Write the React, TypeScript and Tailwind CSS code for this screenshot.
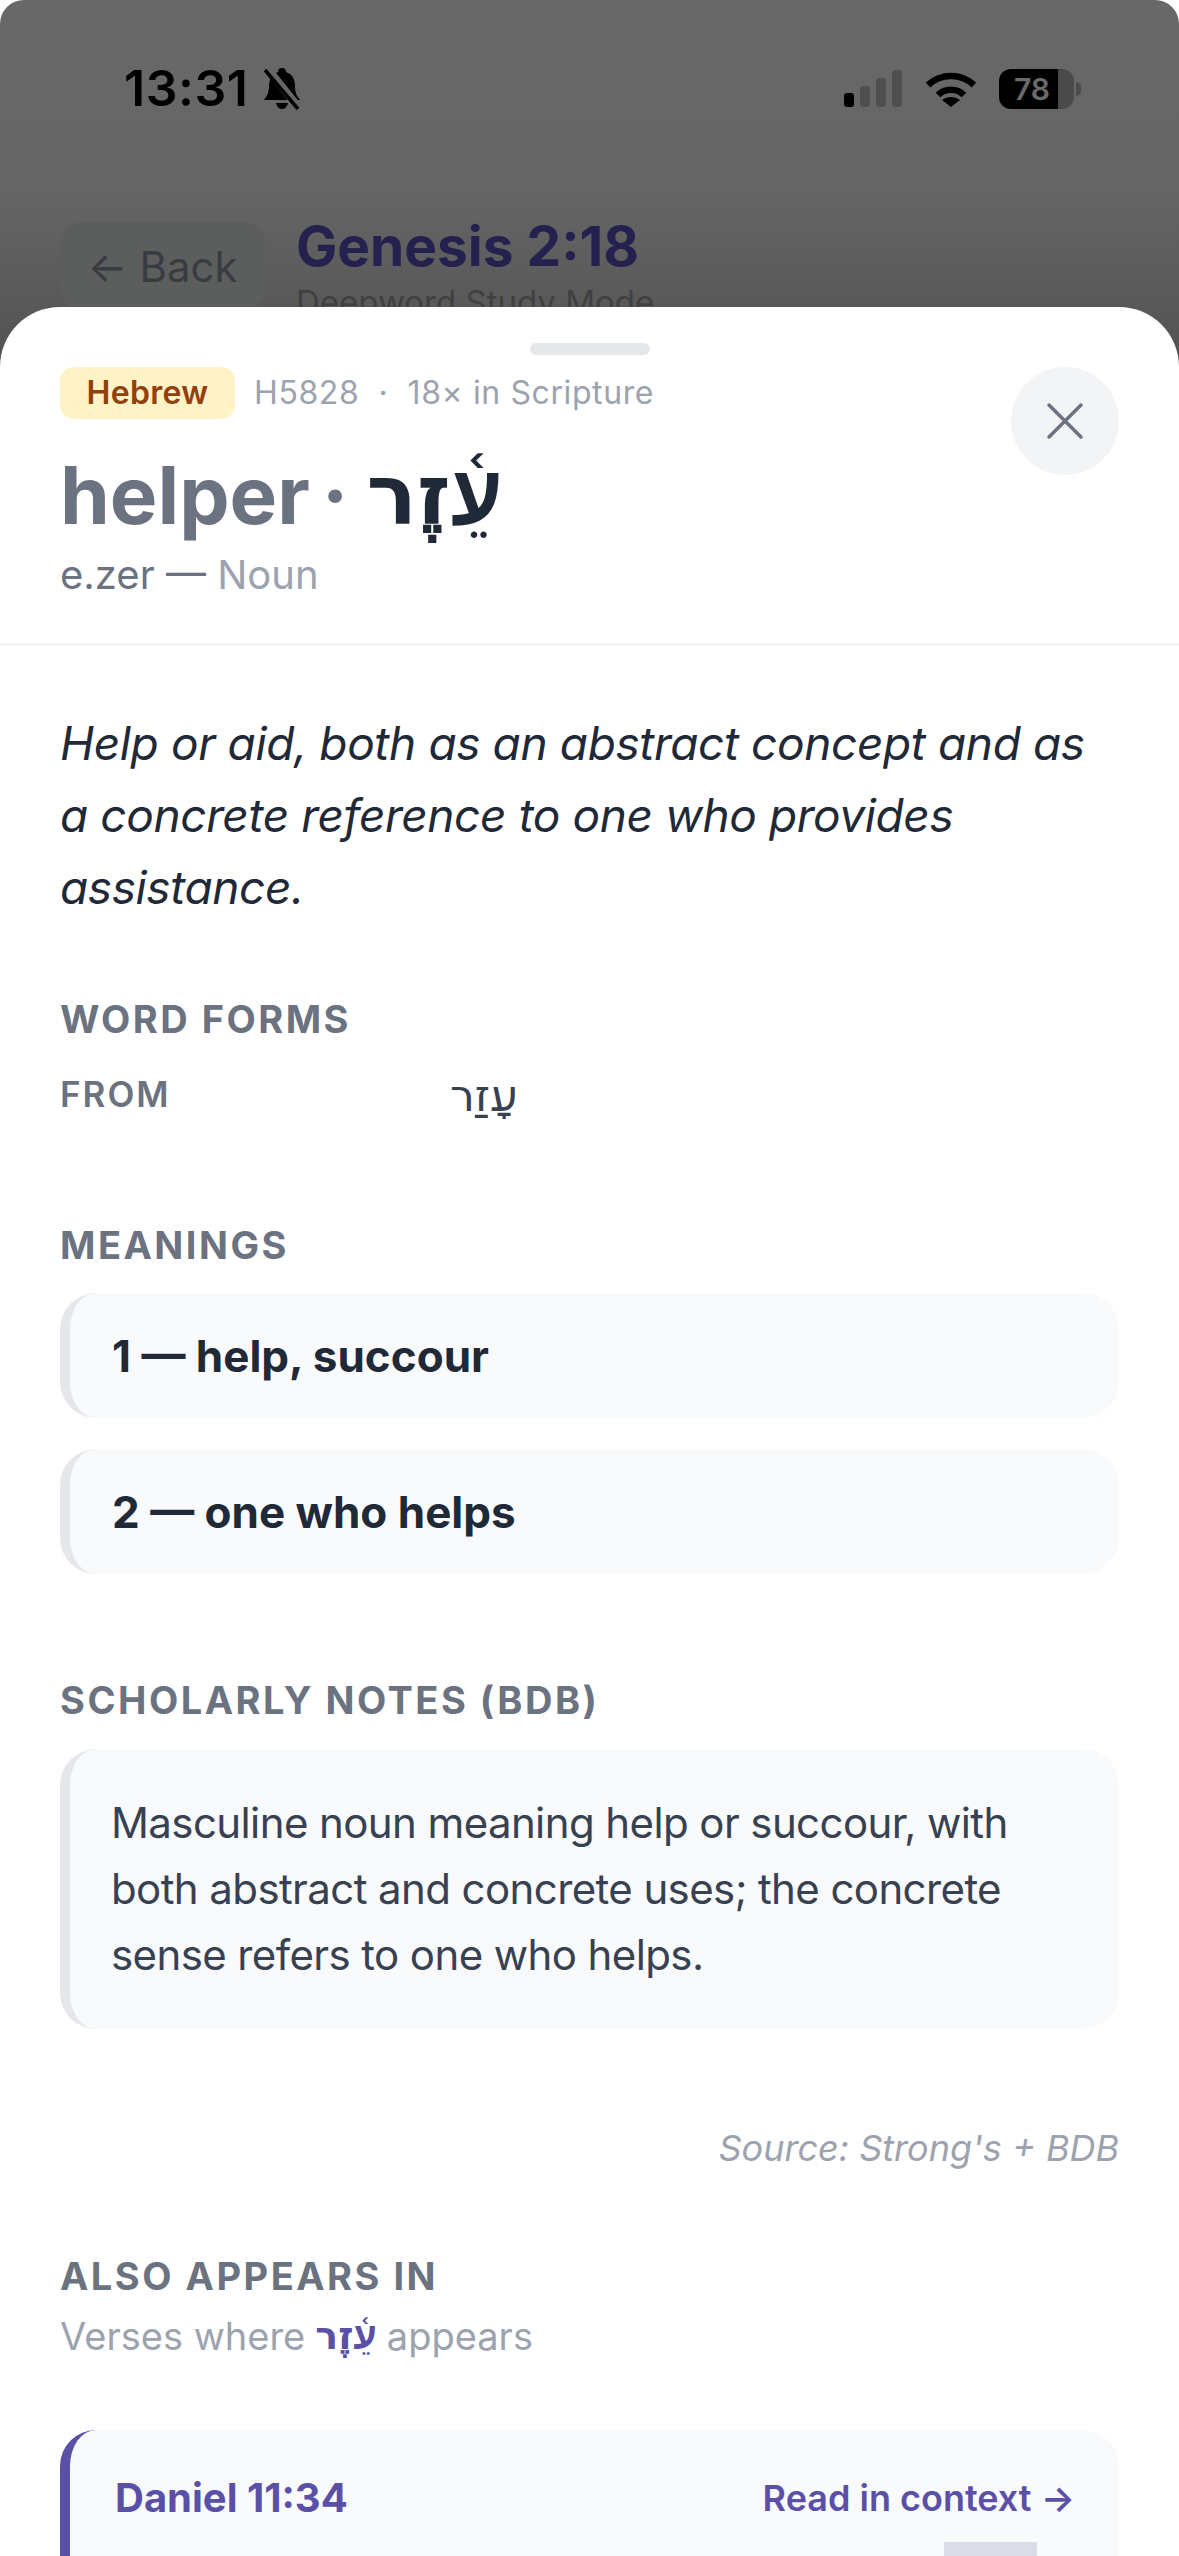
const sans = "font-['Inter','Noto_Sans',sans-serif]"

function Signal() {
  return (
    <svg width="60" height="38" viewBox="0 0 60 38" className="shrink-0">
      <rect x="1" y="23" width="10" height="14" rx="3" fill="#000" />
      <rect x="17" y="16" width="10" height="21" rx="3" fill="#4f4f4f" />
      <rect x="33" y="8" width="10" height="29" rx="3" fill="#4f4f4f" />
      <rect x="49" y="0" width="10" height="37" rx="3" fill="#4f4f4f" />
    </svg>
  )
}

function Wifi() {
  return (
    <svg width="52" height="38" viewBox="0 0 52 38" fill="none" stroke="#000" className="shrink-0">
      <path d="M3 15 C16 3 36 3 49 15" strokeWidth="6.5" />
      <path d="M13 25 C20 18 32 18 39 25" strokeWidth="6.5" />
      <path d="M26 37 L17 30 C22 26 30 26 35 30 Z" fill="#000" stroke="none" />
    </svg>
  )
}

function Battery() {
  return (
    <div className="flex items-center gap-[2px]">
      <div className="relative flex h-[40px] w-[75px] overflow-hidden rounded-[12px] bg-[#4a4a4a]">
        <div className="h-full w-[59px] bg-black" />
        <span className="absolute left-[15px] top-0 text-[30px] font-semibold leading-[40px] text-[#6a6a6a]">78</span>
      </div>
      <div className="h-[14px] w-[5px] rounded-r-full bg-[#4a4a4a]" />
    </div>
  )
}

function BellOff() {
  return (
    <svg width="44" height="44" viewBox="0 0 42 44" className="shrink-0">
      <path d="M21 2 C24 2 25 4 25 6 C31 8 34 13 34 20 C34 27 36 30 39 34 L3 34 C6 30 8 27 8 20 C8 13 11 8 17 6 C17 4 18 2 21 2 Z" fill="#000" />
      <path d="M15 37 L27 37 C26 41 24 43 21 43 C18 43 16 41 15 37 Z" fill="#000" />
      <path d="M6 2 L38 42" stroke="#666" strokeWidth="8" />
      <path d="M4 4 L37 43" stroke="#000" strokeWidth="3.5" />
    </svg>
  )
}

function SectionTitle({ children }: { children: React.ReactNode }) {
  return <h3 className="text-[38px] font-bold uppercase leading-[44px] tracking-[2.5px] text-[#6b7280]">{children}</h3>
}

function Meaning({ children }: { children: React.ReactNode }) {
  return (
    <div className="flex h-[125px] items-center rounded-[36px] border-l-[10px] border-[#e5e7eb] bg-[#f9fafb] pl-[42px] text-[44px] font-bold text-[#1f2937]">
      {children}
    </div>
  )
}

export default function App() {
  return (
    <div className={`${sans} flex h-[2556px] w-[1179px] flex-col overflow-hidden bg-white`}>
      {/* dimmed page behind the sheet */}
      <div className="h-[367px] shrink-0 overflow-hidden rounded-t-[24px] bg-gradient-to-b from-[#686868] via-[#666666] to-[#525252] px-[60px]">
        <div className="flex h-[222px] items-start justify-between pt-[60px]">
          <div className="ml-[64px] flex items-center gap-[12px]">
            <span className="text-[50px] font-semibold leading-[56px] tracking-[0.5px] text-black">13:31</span>
            <BellOff />
          </div>
          <div className="mr-[38px] mt-[9px] flex items-center gap-[22px]">
            <Signal />
            <Wifi />
            <Battery />
          </div>
        </div>
        <div className="flex gap-[31px]">
          <div className="flex h-[88px] w-[205px] items-center justify-center gap-[12px] rounded-[22px] bg-[#5c5e5e] text-[42px] text-[#383b40]">
            <span>←</span>
            <span>Back</span>
          </div>
          <div className="-mt-[6px]">
            <div className="text-[55px] font-bold leading-[60px] text-[#24214f]">Genesis 2:18</div>
            <div className="mt-[4px] text-[33px] leading-[44px] text-[#404040]">Deepword Study Mode</div>
          </div>
        </div>
      </div>

      <div className="relative -mt-[60px] flex-1 rounded-t-[60px] bg-white">
        <div className="absolute left-[530px] top-[36px] h-[12px] w-[120px] rounded-full bg-[#e5e7eb]" />
        <button className="absolute right-[60px] top-[60px] flex h-[108px] w-[108px] items-center justify-center rounded-full bg-[#f3f4f6]">
          <svg width="40" height="40" viewBox="0 0 40 40" stroke="#6b7280" strokeWidth="3.5" strokeLinecap="round">
            <path d="M4 4 L36 36 M36 4 L4 36" />
          </svg>
        </button>

        <header className="border-b-[3px] border-[#f3f4f6] px-[60px] pb-[44px] pt-[60px]">
          <div className="flex items-center gap-[19px]">
            <span className="flex h-[52px] w-[175px] items-center justify-center rounded-[14px] bg-[#fef3c7] text-[32px] font-semibold tracking-[0.3px] text-[#92400e]">
              Hebrew
            </span>
            <span className="text-[32px] tracking-[0.6px] text-[#9ca3af]">H5828 &nbsp;·&nbsp; 18× in Scripture</span>
          </div>
          <div className="mt-[28px] flex items-center gap-[12px] text-[80px] font-bold leading-[96px] text-[#6b7280]">
            <span>helper</span>
            <span>·</span>
            <span lang="he" dir="rtl" className="ml-[6px] font-['DejaVu_Sans',sans-serif] text-[84px] text-[#1f2937]">עֵ֫זֶר</span>
          </div>
          <div className="mt-[8px] text-[40px] leading-[48px]">
            <span className="text-[#6b7280]">e.zer — </span>
            <span className="text-[#9ca3af]">Noun</span>
          </div>
        </header>

        <div className="px-[60px]">
          <p className="pt-[61px] text-[46px] italic leading-[72px] tracking-[-0.4px] text-[#1f2937]">
            Help or aid, both as an abstract concept and as a concrete reference to one who provides assistance.
          </p>

          <div className="mt-[74px]">
            <SectionTitle>Word Forms</SectionTitle>
          </div>
          <div className="mt-[23px] flex h-[60px] items-center">
            <span className="w-[390px] text-[35px] font-semibold tracking-[2px] text-[#6b7280]">FROM</span>
            <span lang="he" dir="rtl" className="mt-[3px] font-['DejaVu_Sans',sans-serif] text-[44px] text-[#374151]">עָזַר</span>
          </div>

          <div className="mt-[99px]">
            <SectionTitle>Meanings</SectionTitle>
          </div>
          <div className="mt-[26px] flex flex-col gap-[31px]">
            <Meaning>1 — help, succour</Meaning>
            <Meaning>2 — one who helps</Meaning>
          </div>

          <div className="mt-[104px]">
            <SectionTitle>Scholarly Notes (BDB)</SectionTitle>
          </div>
          <div className="mt-[27px] flex h-[280px] items-center rounded-[36px] border-l-[10px] border-[#e5e7eb] bg-[#f9fafb] pl-[41px] pr-[60px] text-[42px] leading-[66px] tracking-[-0.6px] text-[#374151]">
            Masculine noun meaning help or succour, with both abstract and concrete uses; the concrete sense refers to one who helps.
          </div>

          <div className="mt-[94px] text-right text-[36px] italic leading-[50px] text-[#9ca3af]">Source: Strong's + BDB</div>

          <div className="mt-[81px]">
            <SectionTitle>Also Appears In</SectionTitle>
          </div>
          <div className="mt-[15px] flex items-center gap-[10px] text-[38px] leading-[46px] text-[#9ca3af]">
            <span>Verses where</span>
            <span lang="he" dir="rtl" className="font-['DejaVu_Sans',sans-serif] font-bold text-[#5b50a8]">עֵ֫זֶר</span>
            <span>appears</span>
          </div>

          <div className="mt-[71px] h-[400px] rounded-[36px] border-l-[10px] border-[#5b50a8] bg-[#f9fafb] pl-[45px] pr-[44px] pt-[38px]">
            <div className="flex items-center justify-between">
              <span className="text-[40px] font-bold text-[#5b50a8]">Daniel 11:34</span>
              <span className="text-[36px] font-semibold text-[#5b50a8]">Read in context →</span>
            </div>
            <div className="ml-[829px] mt-[14px] h-[40px] w-[93px] bg-[#dcdce8]" />
          </div>
        </div>
      </div>
    </div>
  )
}
